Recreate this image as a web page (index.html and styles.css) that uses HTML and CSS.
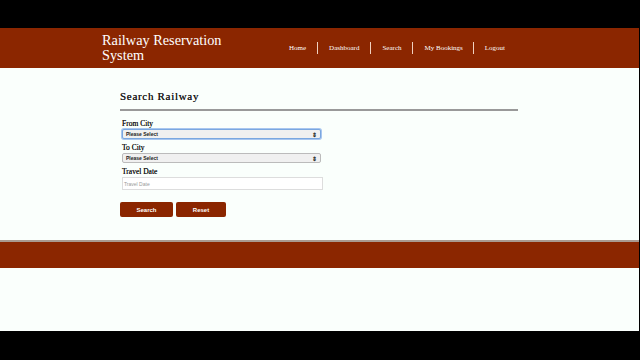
FILE: index.html
```html
<!DOCTYPE html>
<html>
<head>
<meta charset="utf-8">
<link rel="stylesheet" href="styles.css">
</head>
<body>
<div class="topbar"></div>
<div class="page">
  <header class="header">
    <div class="brand">Railway Reservation<br>System</div>
    <nav class="nav">
      <a>Home</a><span class="sep"></span>
      <a>Dashboard</a><span class="sep"></span>
      <a>Search</a><span class="sep"></span>
      <a>My Bookings</a><span class="sep"></span>
      <a>Logout</a>
    </nav>
  </header>
  <main class="main">
    <h1 class="title">Search Railway</h1>
    <div class="rule"></div>
    <form class="form">
      <label class="label">From City</label>
      <div class="select focus"><span>Please Select</span><span class="arrows">&#8661;</span></div>
      <label class="label">To City</label>
      <div class="select"><span>Please Select</span><span class="arrows">&#8661;</span></div>
      <label class="label">Travel Date</label>
      <div class="input">Travel Date</div>
      <div class="buttons">
        <button type="button" class="btn btn-search">Search</button>
        <button type="button" class="btn btn-reset">Reset</button>
      </div>
    </form>
  </main>
  <footer class="footer"></footer>
</div>
</body>
</html>
```
FILE: styles.css
```css
html, body { margin: 0; padding: 0; }
body { background: #000; width: 640px; height: 360px; overflow: hidden; }
.topbar { height: 28px; background: #000; }
.page { width: 639px; height: 303px; background: #fafffc; display: flex; flex-direction: column; }
.header { height: 40px; flex: none; background: #8b2600; display: flex; align-items: center; padding-left: 102px; box-sizing: border-box; }
.brand { font-family: "Liberation Serif", serif; color: #fff; font-size: 14.3px; line-height: 15px; width: 176px; margin-top: -1px; }
.nav { display: flex; align-items: center; }
.nav a { font-family: "Liberation Serif", serif; color: #fff; font-size: 7px; padding: 0 11px; }
.nav a:nth-child(7) { padding-right: 10px; }
.sep { width: 1px; height: 12px; background: #f0d0c0; }
.main { padding: 22px 0 0 120px; height: 172px; flex: none; box-sizing: border-box; }
.title { margin: 0; font-family: "Liberation Serif", serif; font-weight: normal; font-size: 11px; letter-spacing: 0.7px; color: #222; line-height: 13px; text-shadow: 0 0 0.2px #222; }
.rule { width: 398px; height: 2px; background: #999; margin-top: 6px; }
.form { display: flex; flex-direction: column; padding-left: 2px; margin-top: 8px; }
.label { font-family: "Liberation Serif", serif; font-size: 7.5px; font-weight: normal; color: #222; line-height: 9px; margin-bottom: 1px; text-shadow: 0 0 0.3px #222; }
.select { width: 199px; height: 10px; box-sizing: border-box; border: 1px solid #bbb; border-radius: 2px; background: #f0f0f0; font-family: "Liberation Sans", sans-serif; font-size: 5px; font-weight: bold; color: #222; display: flex; justify-content: space-between; align-items: center; padding: 0 3px; margin-bottom: 4px; }
.select.focus { border-color: #7aa7e0; box-shadow: 0 0 0 1px #a8c6ef; }
.arrows { font-size: 6px; }
.input { width: 201px; height: 13px; box-sizing: border-box; border: 1px solid #ddd; background: #fff; font-family: "Liberation Sans", sans-serif; font-size: 5px; color: #999; display: flex; align-items: center; padding-left: 1px; }
.buttons { display: flex; gap: 3px; margin-top: 12px; margin-left: -2px; }
.btn { border: 0; border-radius: 2px; background: #8b2600; color: #fff; font-family: "Liberation Sans", sans-serif; font-size: 6px; font-weight: bold; height: 15px; padding: 0; }
.btn-search { width: 53px; }
.btn-reset { width: 50px; }
.footer { height: 26px; flex: none; background: #8b2600; border-top: 2px solid #aa9a90; }
```
